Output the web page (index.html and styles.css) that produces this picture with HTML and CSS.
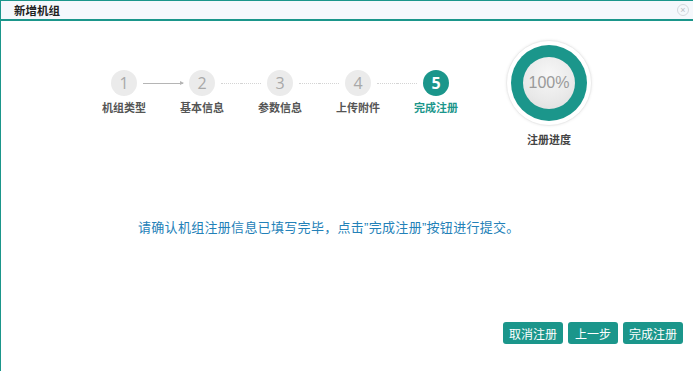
FILE: index.html
```html
<!DOCTYPE html>
<html lang="zh-CN">
<head>
<meta charset="UTF-8" />
<title>新增机组</title>
<link rel="stylesheet" href="styles.css">
</head>
<body>

<div class="dialog">
  <div class="dialog-head">
    <span class="dialog-title">新增机组</span>
    <span class="dialog-close">×</span>
  </div>

  <div class="dialog-body">
    <div class="wizard">
      <div class="steps">
        <div class="step done">
          <div class="step-top"><span class="line none"></span><span class="num">1</span><span class="line solid"></span></div>
          <div class="step-name">机组类型</div>
        </div>
        <div class="step">
          <div class="step-top"><span class="line solid arrow"></span><span class="num">2</span><span class="line"></span></div>
          <div class="step-name">基本信息</div>
        </div>
        <div class="step">
          <div class="step-top"><span class="line"></span><span class="num">3</span><span class="line"></span></div>
          <div class="step-name">参数信息</div>
        </div>
        <div class="step">
          <div class="step-top"><span class="line"></span><span class="num">4</span><span class="line"></span></div>
          <div class="step-name">上传附件</div>
        </div>
        <div class="step active">
          <div class="step-top"><span class="line"></span><span class="num">5</span><span class="line none"></span></div>
          <div class="step-name">完成注册</div>
        </div>
      </div>

      <div class="progress">
        <div class="ring-outer">
          <div class="ring">
            <div class="ring-inner">100%</div>
          </div>
        </div>
        <div class="progress-name">注册进度</div>
      </div>
    </div>

    <p class="message">请确认机组注册信息已填写完毕，点击”完成注册”按钮进行提交。</p>

    <div class="actions">
      <button type="button">取消注册</button>
      <button type="button" class="narrow">上一步</button>
      <button type="button">完成注册</button>
    </div>
  </div>
</div>

</body>
</html>
```

FILE: styles.css
```css
body {
  margin: 0;
  font-family: "Liberation Sans", "Noto Sans CJK SC", sans-serif;
  background: #fff;
}
.dialog {
  width: 693px;
  height: 371px;
  box-sizing: border-box;
  border-top: 1px solid #1b968b;
  border-left: 1px solid #1b968b;
  display: flex;
  flex-direction: column;
}
.dialog-head {
  height: 18px;
  background: #f5f8fc;
  border-bottom: 2px solid #1b968b;
  display: flex;
  align-items: center;
  justify-content: space-between;
  padding: 0 4px 0 13px;
}
.dialog-title {
  font-family: "Noto Sans CJK SC", sans-serif;
  font-size: 11.5px;
  font-weight: 700;
  color: #222;
}
.dialog-close {
  width: 10px;
  height: 10px;
  border: 1px solid #d5d9de;
  border-radius: 50%;
  color: #b8bec4;
  font-size: 9px;
  line-height: 10px;
  text-align: center;
}
.dialog-body {
  flex: 1;
  display: flex;
  flex-direction: column;
}
.wizard {
  display: flex;
  align-items: flex-start;
  padding: 19px 0 0 84px;
}
/* шаги */
.steps {
  display: flex;
  margin-top: 30px;
}
.step {
  width: 78px;
  display: flex;
  flex-direction: column;
  align-items: center;
}
.step-top {
  display: flex;
  align-items: center;
  width: 100%;
}
.num {
  width: 26px;
  height: 26px;
  border-radius: 50%;
  background: #ebebeb;
  color: #a8a8a8;
  font-family: "Open Sans", sans-serif;
  font-size: 16px;
  line-height: 26px;
  text-align: center;
  flex-shrink: 0;
}
.line {
  flex: 1;
  height: 0;
  border-top: 1px dotted #d4d4d4;
  position: relative;
}
.step-top .line:first-child { margin-right: 6px; }
.step-top .line:last-child { margin-left: 6px; }
.line.solid {
  border-top: 1px solid #b5b5b5;
}
.line.none {
  border-top-color: transparent;
}
.line.arrow::after {
  content: "";
  position: absolute;
  right: -1px;
  top: -3px;
  border-left: 4px solid #b5b5b5;
  border-top: 2.5px solid transparent;
  border-bottom: 2.5px solid transparent;
}
.step-name {
  margin-top: 4px;
  font-family: "Noto Sans CJK SC", sans-serif;
  font-size: 11px;
  line-height: 14px;
  font-weight: 700;
  color: #555;
}
.step.active .num {
  background: #1b968b;
  color: #fff;
  font-weight: 700;
}
.step.active .step-name {
  color: #1b968b;
}
/* прогресс */
.progress {
  margin-left: 31px;
  display: flex;
  flex-direction: column;
  align-items: center;
}
.ring-outer {
  width: 86px;
  height: 86px;
  box-sizing: border-box;
  border-radius: 50%;
  background: #fff;
  border: 1px solid #ececec;
  box-shadow: 0 0 3px rgba(0, 0, 0, 0.08);
  padding: 4px;
}
.ring {
  width: 76px;
  height: 76px;
  box-sizing: border-box;
  border-radius: 50%;
  background: #1b968b;
  padding: 12px;
}
.ring-inner {
  width: 52px;
  height: 52px;
  border-radius: 50%;
  background: radial-gradient(circle at 50% 35%, #f7f7f7 0%, #e9e9e9 60%, #dcdcdc 100%);
  color: #9a9a9a;
  font-size: 16px;
  line-height: 52px;
  text-align: center;
}
.progress-name {
  margin-top: 6px;
  font-family: "Noto Sans CJK SC", sans-serif;
  font-size: 11px;
  line-height: 14px;
  font-weight: 700;
  color: #444;
}
.message {
  margin: 74px 0 0 137px;
  font-family: "Liberation Sans", "Noto Sans CJK SC", sans-serif;
  font-size: 13px;
  line-height: 16px;
  letter-spacing: 0.3px;
  color: #2381b8;
}
.actions {
  margin-top: auto;
  display: flex;
  justify-content: flex-end;
  gap: 5px;
  padding: 0 10px 27px 0;
}
button {
  height: 22px;
  padding: 0 6px;
  border: none;
  border-radius: 3px;
  background: #1b968b;
  color: #fff;
  font-family: "Noto Sans CJK SC", sans-serif;
  font-size: 12px;
  cursor: pointer;
}
button.narrow {
  min-width: 50px;
}
```
